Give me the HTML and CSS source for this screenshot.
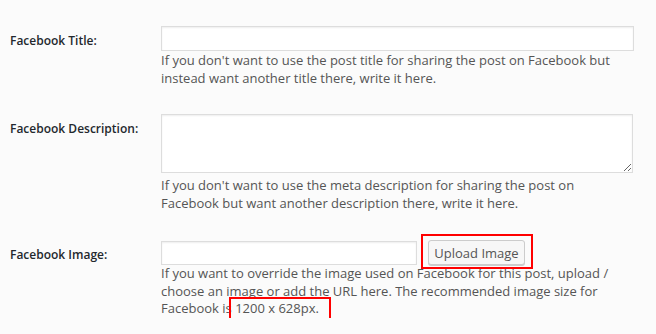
FILE: index.html
```html
<!DOCTYPE html>
<html lang="en">
<head>
    <meta charset="UTF-8">
    <meta name="viewport" content="width=device-width, initial-scale=1.0">
    <title>Facebook Settings</title>
    <link rel="stylesheet" href="styles.css">
</head>
<body>
    <div class="form-table">
        <!-- Title -->
        <div class="form-row row-title">
            <label class="form-label" for="fbTitle">Facebook Title:</label>
            <div class="form-field">
                <input type="text" class="text-input wide" id="fbTitle">
                <p class="description">If you don't want to use the post title for sharing the post on Facebook but instead want another title there, write it here.</p>
            </div>
        </div>

        <!-- Description -->
        <div class="form-row row-desc">
            <label class="form-label" for="fbDesc">Facebook Description:</label>
            <div class="form-field">
                <textarea class="text-area" id="fbDesc"></textarea>
                <p class="description">If you don't want to use the meta description for sharing the post on Facebook but want another description there, write it here.</p>
            </div>
        </div>

        <!-- Image -->
        <div class="form-row row-image">
            <label class="form-label" for="fbImage">Facebook Image:</label>
            <div class="form-field">
                <div class="upload-line">
                    <input type="text" class="text-input short" id="fbImage">
                    <span class="highlight-box">
                        <button type="button" class="button">Upload Image</button>
                    </span>
                </div>
                <p class="description">If you want to override the image used on Facebook for this post, upload / choose an image or add the URL here. The recommended image size for Facebook is <span class="highlight-text">1200 x 628px.</span></p>
            </div>
        </div>
    </div>
</body>
</html>
```

FILE: styles.css
```css
* {
    margin: 0;
    padding: 0;
    box-sizing: border-box;
}

body {
    background: #fbfbfb;
    font-family: "Open Sans", "Liberation Sans", sans-serif;
    font-size: 13px;
    color: #444;
    overflow: hidden;
}

.form-table {
    display: flex;
    flex-direction: column;
    padding-top: 26px;
}

.form-row {
    display: flex;
    align-items: flex-start;
}

.row-desc {
    margin-top: 27px;
}

.row-image {
    margin-top: 28px;
}

.form-label {
    width: 161px;
    padding-left: 10px;
    padding-top: 6px;
    font-size: 12px;
    font-weight: 600;
    color: #23282d;
    line-height: 17px;
}

.form-field {
    width: 473px;
}

.text-input {
    display: block;
    height: 25px;
    border: 1px solid #ddd;
    background: #fff;
    box-shadow: inset 0 1px 2px rgba(0, 0, 0, 0.07);
    font-family: inherit;
    font-size: 13px;
}

.text-input.wide {
    width: 473px;
}

.text-input.short {
    width: 256px;
    height: 24px;
}

.text-area {
    display: block;
    width: 472px;
    height: 59px;
    border: 1px solid #ddd;
    background: #fff;
    box-shadow: inset 0 1px 2px rgba(0, 0, 0, 0.07);
    font-family: inherit;
    font-size: 13px;
}

.description {
    margin-top: 1px;
    line-height: 17.5px;
    color: #555;
}

.row-desc .description {
    margin-top: 4px;
}

.upload-line {
    display: flex;
    align-items: flex-end;
}

/* red annotation frames drawn over the content */
.highlight-box {
    position: relative;
    display: inline-flex;
    margin-left: 11px;
}

.highlight-box::after {
    content: "";
    position: absolute;
    top: -6px;
    bottom: -4px;
    left: -7px;
    right: -8px;
    border: 2px solid #f00;
    pointer-events: none;
}

.button {
    width: 97px;
    height: 25px;
    border: 1px solid #ccc;
    border-radius: 3px;
    background: #f7f7f7;
    box-shadow: 0 1px 0 #ccc;
    color: #555;
    font-family: inherit;
    font-size: 13px;
    line-height: 22px;
}

.row-image .description {
    margin-top: 0;
}

.highlight-text {
    position: relative;
}

.highlight-text::after {
    content: "";
    position: absolute;
    top: -2px;
    bottom: -3px;
    left: -6px;
    right: -12px;
    border: 2px solid #f00;
}
```
